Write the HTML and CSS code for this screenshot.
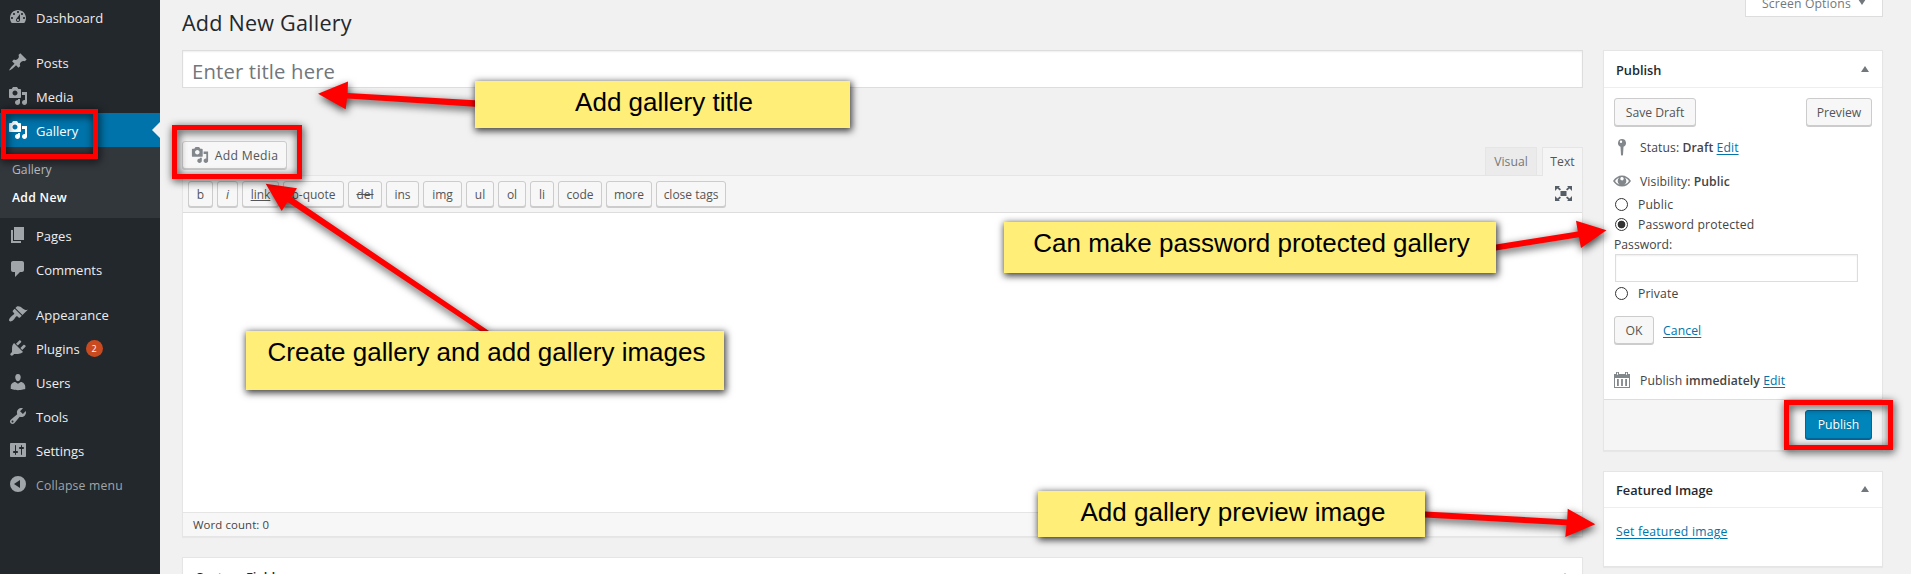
FILE: index.html
```html
<!DOCTYPE html>
<html lang="en">
<head>
<meta charset="utf-8">
<title>Add New Gallery</title>
<link rel="stylesheet" href="styles.css">
</head>
<body>
<svg class="defs" width="0" height="0" aria-hidden="true">
  <symbol id="i-media" viewBox="0 0 20 20"><path d="M13 11V4c0-.55-.45-1-1-1h-1.67L9 1H5L3.67 3H2c-.55 0-1 .45-1 1v7c0 .55.45 1 1 1h10c.55 0 1-.45 1-1zM7 4.5c1.38 0 2.5 1.12 2.5 2.5S8.38 9.5 7 9.5 4.5 8.38 4.5 7 5.62 4.5 7 4.5zM14 6h5v10.5c0 1.38-1.12 2.5-2.5 2.5S14 17.88 14 16.5s1.12-2.5 2.5-2.5c.17 0 .34.02.5.05V9h-3V6zm-4 8.05V13h2v3.5c0 1.38-1.12 2.5-2.5 2.5S7 17.88 7 16.5 8.12 14 9.5 14c.17 0 .34.02.5.05z"/></symbol>
</svg>
<div class="page">
  <nav class="sidebar">
    <a class="item"><svg viewBox="0 0 20 20"><path fill-rule="evenodd" d="M3.76 16h12.48c1.1-1.37 1.76-3.11 1.76-5 0-4.42-3.58-8-8-8s-8 3.58-8 8c0 1.89.66 3.63 1.76 5zM10 4c.55 0 1 .45 1 1s-.45 1-1 1-1-.45-1-1 .45-1 1-1zM6 6c.55 0 1 .45 1 1s-.45 1-1 1-1-.45-1-1 .45-1 1-1zm8 0c.55 0 1 .45 1 1s-.45 1-1 1-1-.45-1-1 .45-1 1-1zm-5.37 5.55L12 7v6c0 1.1-.9 2-2 2s-2-.9-2-2c0-.57.24-1.08.63-1.45zM4 10c.55 0 1 .45 1 1s-.45 1-1 1-1-.45-1-1 .45-1 1-1zm12 0c.55 0 1 .45 1 1s-.45 1-1 1-1-.45-1-1 .45-1 1-1zm-5 3c0-.55-.45-1-1-1s-1 .45-1 1 .45 1 1 1 1-.45 1-1z"/></svg><span>Dashboard</span></a>
    <div class="sep"></div>
    <a class="item"><svg viewBox="0 0 20 20"><path d="M10.44 3.02l1.82-1.82 6.36 6.35-1.83 1.82c-1.05-.68-2.48-.57-3.41.36l-.75.75c-.92.93-1.04 2.35-.35 3.41l-1.83 1.82-2.41-2.41-2.8 2.79c-.42.42-3.38 2.71-3.8 2.29s1.86-3.39 2.28-3.81l2.79-2.79L4.1 9.36l1.83-1.82c1.05.69 2.48.57 3.4-.36l.75-.75c.93-.92 1.05-2.35.36-3.41z"/></svg><span>Posts</span></a>
    <a class="item"><svg><use href="#i-media"/></svg><span>Media</span></a>
    <a class="item current"><svg><use href="#i-media"/></svg><span>Gallery</span></a>
    <div class="submenu"><a>Gallery</a><a class="on">Add New</a></div>
    <a class="item"><svg viewBox="0 0 20 20"><path d="M6 15V2h10v13H6zm-1 1h8v2H3V5h2v11z"/></svg><span>Pages</span></a>
    <a class="item"><svg viewBox="0 0 20 20"><path d="M5 2h9c1.1 0 2 .9 2 2v7c0 1.1-.9 2-2 2h-2l-5 5v-5H5c-1.1 0-2-.9-2-2V4c0-1.1.9-2 2-2z"/></svg><span>Comments</span></a>
    <div class="sep"></div>
    <a class="item"><svg viewBox="0 0 20 20"><path d="M14.48 11.06L7.41 3.99l1.5-1.5c.5-.56 2.3-.47 3.51.32 1.21.8 1.43 1.28 2.91 2.1 1.18.64 2.45 1.26 4.45.85zm-.71.71L6.7 4.7 4.93 6.47c-.39.39-.39 1.02 0 1.41l1.06 1.06c.39.39.39 1.03 0 1.42-.6.6-1.43 1.11-2.21 1.69-.35.26-.7.53-1.01.84C1.43 14.23.4 16.08 1.4 17.07c.99 1 2.84-.03 4.18-1.36.31-.31.58-.66.85-1.02.57-.78 1.08-1.61 1.69-2.21.39-.39 1.02-.39 1.41 0l1.06 1.06c.39.39 1.02.39 1.41 0z"/></svg><span>Appearance</span></a>
    <a class="item"><svg viewBox="0 0 20 20"><path d="M13.11 4.36L9.87 7.6 8 5.73l3.24-3.24c.35-.34 1.05-.2 1.56.32.52.51.66 1.21.31 1.55zm-8 1.77l.91-1.12 9.01 9.01-1.19.84c-.71.71-2.63 1.16-3.82 1.16H6.14L4.9 17.26c-.59.59-1.54.59-2.12 0-.59-.58-.59-1.53 0-2.12l1.24-1.24v-3.88c0-1.13.4-3.19 1.09-3.89zm7.26 3.97l3.24-3.24c.34-.35 1.04-.21 1.55.31.52.51.66 1.21.31 1.55l-3.24 3.25z"/></svg><span>Plugins</span><b class="count">2</b></a>
    <a class="item"><svg viewBox="0 0 20 20"><path d="M10 9.25c-2.27 0-2.73-3.44-2.73-3.44C7 4.02 7.82 2 9.97 2c2.16 0 2.98 2.02 2.71 3.81 0 0-.41 3.44-2.68 3.44zm0 2.57L12.72 10c2.39 0 4.52 2.33 4.52 4.53v2.49s-3.65 1.13-7.24 1.13c-3.65 0-7.24-1.13-7.24-1.13v-2.49c0-2.25 1.94-4.48 4.47-4.48z"/></svg><span>Users</span></a>
    <a class="item"><svg viewBox="0 0 20 20"><path d="M16.68 9.77c-1.34 1.34-3.3 1.67-4.95.99l-5.41 6.52c-.99.99-2.59.99-3.58 0s-.99-2.59 0-3.57l6.52-5.42c-.68-1.65-.35-3.61.99-4.95 1.28-1.28 3.12-1.62 4.72-1.06l-2.89 2.89 2.82 2.82 2.86-2.87c.53 1.58.18 3.39-1.08 4.65zM3.81 16.21c.4.39 1.04.39 1.43 0 .4-.4.4-1.04 0-1.43-.39-.4-1.03-.4-1.43 0-.39.39-.39 1.03 0 1.43z"/></svg><span>Tools</span></a>
    <a class="item"><svg viewBox="0 0 20 20"><path d="M18 16V4c0-.55-.45-1-1-1H3c-.55 0-1 .45-1 1v12c0 .55.45 1 1 1h14c.55 0 1-.45 1-1zM8 11h1c.55 0 1 .45 1 1s-.45 1-1 1H8v1.5c0 .28-.22.5-.5.5s-.5-.22-.5-.5V13H6c-.55 0-1-.45-1-1s.45-1 1-1h1V5.5c0-.28.22-.5.5-.5s.5.22.5.5V11zm5-2h-1c-.55 0-1-.45-1-1s.45-1 1-1h1V5.5c0-.28.22-.5.5-.5s.5.22.5.5V7h1c.55 0 1 .45 1 1s-.45 1-1 1h-1v5.5c0 .28-.22.5-.5.5s-.5-.22-.5-.5V9z"/></svg><span>Settings</span></a>
    <a class="item collapse"><svg viewBox="0 0 20 20"><path fill-rule="evenodd" d="M10 2a8 8 0 1 0 0 16 8 8 0 0 0 0-16zM12 6v8l-6-4z"/></svg><span>Collapse menu</span></a>
  </nav>

  <div class="content">
    <main class="main">
      <h1>Add New Gallery</h1>
      <div class="title-field">Enter title here</div>
      <div class="editor-head">
        <div class="btn add-media"><svg><use href="#i-media"/></svg><span>Add Media</span></div>
        <div class="tabs"><span class="tab visual">Visual</span><span class="tab active">Text</span></div>
      </div>
      <div class="editor">
        <div class="toolbar">
          <div class="tags">
            <span class="q" style="width:25px">b</span><span class="q it" style="width:21px">i</span><span class="q un" style="width:37px">link</span><span class="q" style="width:61px">b-quote</span><span class="q st" style="width:34px">del</span><span class="q" style="width:33px">ins</span><span class="q" style="width:39px">img</span><span class="q" style="width:28px">ul</span><span class="q" style="width:28px">ol</span><span class="q" style="width:24px">li</span><span class="q" style="width:44px">code</span><span class="q" style="width:46px">more</span><span class="q" style="width:70px">close tags</span>
          </div>
          <svg class="full" viewBox="0 0 17 15"><path d="M5.500 5h6v5h-6zM0 0h5L3.700 1.300l2.300 2-1.200 1.200-2.400-2L0 5zM17 0v5l-2.400-2.500-2.400 2L11 3.300l2.300-2L12 0zM0 15v-5l2.400 2.500 2.400-2L6 11.700l-2.300 2L5 15zM17 15h-5l1.300-1.300-2.300-2 1.200-1.200 2.400 2L17 10z"/></svg>
        </div>
        <div class="text"></div>
        <div class="count-bar">Word count: 0</div>
      </div>
      <section class="box custom"><header><h2>Custom Fields</h2><i class="tri"></i></header></section>
    </main>

    <aside class="side">
      <div class="screen-options"><span>Screen Options</span><i class="tri down"></i></div>
      <section class="box publish">
        <header><h2>Publish</h2><i class="tri"></i></header>
        <div class="inside">
          <div class="row between"><div class="btn save">Save Draft</div><div class="btn prev">Preview</div></div>
          <div class="row meta status"><svg viewBox="0 0 20 20"><path fill-rule="evenodd" d="M10 2a4 4 0 0 0-1.500 7.700L9 18l1 .8 1-.8.500-8.300A4 4 0 0 0 10 2zM9 3.600a1.200 1.200 0 1 1 0 2.400 1.200 1.200 0 0 1 0-2.400z"/></svg><span>Status: <b>Draft</b> <a>Edit</a></span></div>
          <div class="row meta vis"><svg viewBox="0 0 20 20"><path fill-rule="evenodd" d="M1 10q3.700-5.500 9-5.500T19 10q-3.700 5.500-9 5.500T1 10zM3 10q1.400 2.800 4.600 3.700A4.700 4.700 0 0 1 7.200 6.400Q4.500 7.500 3 10zM17 10q-1.500-2.500-4.200-3.600A4.700 4.700 0 0 1 12.400 13.700Q15.600 12.800 17 10zM10 6a1.700 1.700 0 1 0 1.500 2.500A1.700 1.700 0 0 0 10 6z"/></svg><span>Visibility: <b>Public</b></span></div>
          <div class="row radio"><i></i><span>Public</span></div>
          <div class="row radio on"><i></i><span>Password protected</span></div>
          <div class="row pw-label">Password:</div>
          <div class="pw"></div>
          <div class="row radio private"><i></i><span>Private</span></div>
          <div class="row ok-row"><div class="btn ok">OK</div><a>Cancel</a></div>
          <div class="row meta when"><svg viewBox="0 0 20 20"><path fill-rule="evenodd" d="M2 4h2V2h3v2h6V2h3v2h2v14H2zM3 8v9h14V8zM5 9h1.800v7H5zM9.100 9h1.800v7H9.100zM13.200 9H15v7h-1.800zM5 2.800v2h1v-2zM14 2.800v2h1v-2z"/></svg><span>Publish <b>immediately</b> <a>Edit</a></span></div>
        </div>
        <footer><div class="btn primary">Publish</div></footer>
      </section>
      <section class="box featured">
        <header><h2>Featured Image</h2><i class="tri"></i></header>
        <div class="fi"><a>Set featured image</a></div>
      </section>
    </aside>
  </div>

  <svg class="arrows" viewBox="0 0 1911 574">
    <g fill="#f00" stroke="none">
      <path d="M318 93.700L348 81.500 347.600 93 475 100.300v6.400L347 98.500 345.700 109.300z"/>
      <path d="M265.700 183.700L297 188.300 291.500 197 489 331H480L287.500 202 281.700 211z"/>
      <path d="M1606.500 230.300L1576 220.700 1577.800 231.500 1496 244.600v6L1579 237.200 1581 248z"/>
      <path d="M1595.300 524.300L1567.700 508.700 1567.200 519.500 1425 511.500v6L1566.500 525.300 1565.300 537z"/>
    </g>
  </svg>
  <div class="mark mark-gallery"></div>
  <div class="mark mark-media"></div>
  <div class="mark mark-publish"></div>
  <div class="note note-title">Add gallery title</div>
  <div class="note note-create">Create gallery and add gallery images</div>
  <div class="note note-pass">Can make password protected gallery</div>
  <div class="note note-image">Add gallery preview image</div>
</div>
</body>
</html>
```

FILE: styles.css
```css
* { box-sizing: border-box; }
body { margin: 0; background: #f1f1f1; color: #444; font: 12.2px/18px "Open Sans", "Noto Sans", sans-serif; }
.defs { position: absolute; }
.page { position: relative; display: flex; width: 1911px; height: 574px; overflow: hidden; }
b { font-weight: 600; }
h1, h2 { margin: 0; }
a { color: #0073aa; text-decoration: underline; text-underline-offset: 2px; }

/* Sidebar */
.sidebar { width: 160px; height: 574px; flex: none; background: #23282d; font-size: 13px; }
.sidebar a { text-decoration: none; }
.item { position: relative; display: flex; align-items: center; height: 34px; padding: 0 8px; color: #eee; }
.item svg { width: 20px; height: 20px; margin-right: 8px; fill: #a0a5aa; }
.item span { padding-top: 2px; }
.sep { height: 11px; }
.current { background: #0073aa; color: #fff; }
.current svg { fill: #fff; }
.current::after { content: ""; position: absolute; right: 0; top: 9px; border: 8px solid transparent; border-left: 0; border-right-color: #f1f1f1; }
.submenu { height: 71px; background: #32373c; padding: 9px 12px 0; font-size: 12.2px; }
.submenu a { display: block; height: 28px; line-height: 28px; color: #b4b9be; }
.submenu .on { color: #fff; font-weight: 600; letter-spacing: .3px; }
.count { width: 17px; height: 17px; margin-left: 6px; border-radius: 50%; background: #ca4a1f; color: #fff; font: 9px/17px "Open Sans", sans-serif; text-align: center; }
.item.collapse { color: #a0a5aa; font-size: 12.2px; letter-spacing: .2px; }
.collapse span { padding-top: 3px; }

/* Columns */
.content { display: grid; grid-template-columns: 1401px 280px; column-gap: 20px; padding-left: 22px; }
h1 { height: 50px; padding-top: 8px; font-size: 21.6px; line-height: 29px; letter-spacing: .2px; font-weight: 400; color: #23282d; }
.title-field { height: 38px; padding: 0 9px; border: 1px solid #ddd; background: #fff; box-shadow: inset 0 1px 2px rgba(0,0,0,.07); font-size: 20.3px; line-height: 40px; letter-spacing: .15px; color: #72777c; }
.editor-head { display: flex; justify-content: space-between; height: 87px; align-items: flex-end; }
.btn { display: flex; align-items: center; justify-content: center; height: 28px; padding-top: 1px; border: 1px solid #ccc; border-radius: 3px; background: #f7f7f7; box-shadow: 0 1px 0 #ccc; color: #555; }
.add-media { width: 105px; margin-bottom: 6px; letter-spacing: .3px; }
.add-media svg { width: 18px; height: 18px; margin-right: 6px; margin-top: -1px; fill: #82878c; }
.tabs { display: flex; gap: 5px; }
.tab { height: 28px; border: 1px solid #e5e5e5; border-bottom: 0; background: #ebebeb; color: #777; text-align: center; line-height: 27px; width: 52px; }
.tab.active { width: 41px; height: 29px; margin-bottom: -1px; position: relative; background: #f5f5f5; color: #555; }
.editor { height: 362px; display: flex; flex-direction: column; border: 1px solid #e5e5e5; box-shadow: 0 1px 1px rgba(0,0,0,.04); background: #fff; }
.toolbar { display: flex; align-items: center; justify-content: space-between; height: 37px; padding: 0 10px 0 5px; border-bottom: 1px solid #ddd; background: #f5f5f5; }
.tags { display: flex; gap: 4px; }
.q { height: 26px; border: 1px solid #ccc; border-radius: 3px; background: #f7f7f7; box-shadow: 0 1px 0 #ccc; color: #555; font-size: 12px; line-height: 25px; text-align: center; white-space: nowrap; }
.it { font-style: italic; }
.un { text-decoration: underline; }
.st { text-decoration: line-through; }
.full { width: 17px; height: 15px; margin-top: -1px; fill: #555d66; }
.text { flex: 1; }
.count-bar { height: 24px; padding-left: 10px; border-top: 1px solid #e5e5e5; background: #f7f7f7; font-size: 11.400px; line-height: 23px; letter-spacing: .1px; }

/* Boxes */
.box { border: 1px solid #e5e5e5; background: #fff; box-shadow: 0 1px 1px rgba(0,0,0,.04); }
.box header { display: flex; align-items: center; justify-content: space-between; height: 37px; padding: 2px 13px 0 12px; border-bottom: 1px solid #eee; }
.box h2 { font-size: 12.8px; font-weight: 600; color: #23282d; }
.custom { margin-top: 20px; height: 60px; }
.tri { border: 4px solid transparent; border-top: 0; border-bottom: 6px solid #72777c; margin-top: -2px; }
.tri.down { border-top: 6px solid #72777c; border-bottom: 0; }
.screen-options { width: 138px; height: 17px; margin: 0 0 33px auto; padding: 0 16px; display: flex; justify-content: space-between; border: 1px solid #ddd; border-top: 0; background: #fff; line-height: 8px; letter-spacing: .15px; color: #72777c; }
.screen-options .tri { margin-top: -1px; }
.publish { height: 401px; }
.inside { height: 311px; padding: 10px 10px 0; }
.row { display: flex; align-items: center; }
.between { justify-content: space-between; }
.save { width: 82px; }
.prev { width: 66px; }
.meta { letter-spacing: .08px; }
.meta svg { width: 20px; height: 20px; margin: -2px 8px 0 -2px; fill: #82878c; }
.status { height: 20px; margin-top: 12px; }
.vis { height: 20px; margin-top: 14px; }
.radio { height: 20px; letter-spacing: .15px; }
.vis + .radio { margin-top: 3px; }
.radio i { width: 13px; height: 13px; margin: -1px 10px 0 1px; border: 1px solid #333; border-radius: 50%; }
.radio.on i { background: radial-gradient(circle, #333 3.500px, transparent 4.200px); }
.pw-label { height: 19px; }
.pw { width: 243px; height: 28px; margin-left: 1px; border: 1px solid #ddd; box-shadow: inset 0 1px 2px rgba(0,0,0,.07); }
.private { margin-top: 2px; }
.ok-row { margin-top: 12px; gap: 9px; letter-spacing: .1px; }
.ok-row a { padding-top: 1px; }
.ok { width: 40px; }
.when { height: 20px; margin-top: 27px; }
.publish footer { display: flex; justify-content: flex-end; height: 51px; padding: 10px; border-top: 1px solid #ddd; background: #f5f5f5; }
.primary { width: 67px; height: 29px; border-color: #006799; background: #0085ba; box-shadow: 0 1px 0 #006799; color: #fff; text-shadow: 0 -1px 1px #006799; }
.featured { margin-top: 20px; height: 96px; }
.featured header { height: 36px; padding-top: 1px; }
.fi { padding: 15px 12px; letter-spacing: .22px; }

/* Annotations */
.arrows { position: absolute; left: 0; top: 0; width: 1911px; height: 574px; filter: drop-shadow(1px 3px 4px rgba(0,0,0,.75)); }
.mark { position: absolute; border: 5px solid #f00; filter: drop-shadow(1px 2px 4px rgba(0,0,0,.85)); }
.mark-gallery { left: 1px; top: 109px; width: 97px; height: 50px; }
.mark-media { left: 172px; top: 125px; width: 130px; height: 54px; }
.mark-publish { left: 1784px; top: 400px; width: 109px; height: 50px; }
.note { position: absolute; background: #ffee77; color: #000; box-shadow: 1px 2px 7px 1px rgba(0,0,0,.75); font: 26px/30px "Liberation Sans", Arial, sans-serif; text-align: center; padding: 6px 0 0 3px; white-space: nowrap; }
.note-title { left: 475px; top: 81px; width: 375px; height: 47px; }
.note-create { left: 246px; top: 331px; width: 478px; height: 59px; }
.note-pass { left: 1004px; top: 222px; width: 492px; height: 51px; }
.note-image { left: 1038px; top: 491px; width: 387px; height: 46px; }
```
